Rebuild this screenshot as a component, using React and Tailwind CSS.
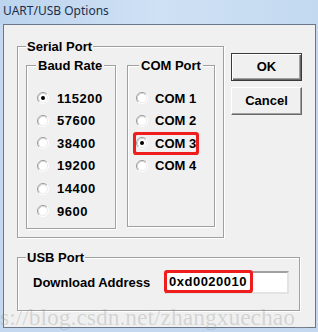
import React from "react";

const Radio = ({ checked }) => (
  <svg width="12" height="12" viewBox="0 0 12 12" className="shrink-0">
    <circle cx="6" cy="6" r="5" fill="#fff" />
    <path d="M2.11 9.89 A5.5 5.5 0 0 1 9.89 2.11" fill="none" stroke="#9a9a9a" />
    <path d="M9.89 2.11 A5.5 5.5 0 0 1 2.11 9.89" fill="none" stroke="#ffffff" />
    <path d="M2.82 9.18 A4.5 4.5 0 0 1 9.18 2.82" fill="none" stroke="#d2d2d2" />
    <path d="M9.18 2.82 A4.5 4.5 0 0 1 2.82 9.18" fill="none" stroke="#ececec" />
    {checked && <circle cx="6" cy="6" r="2" fill="#000" />}
  </svg>
);

const etched =
  "border border-[#a0a0a0] shadow-[inset_1px_1px_0_#ffffff,1px_1px_0_#ffffff]";

const bauds = ["115200", "57600", "38400", "19200", "14400", "9600"];
const coms = ["COM 1", "COM 2", "COM 3", "COM 4"];

export default function App() {
  return (
    <div className="relative w-[318px] h-[332px] overflow-hidden bg-[#c4d9ef] flex flex-col font-['Liberation_Sans',Arial,sans-serif] text-black">
      <div className="h-[24px] shrink-0 flex items-center pl-[3px] pb-[3px] bg-gradient-to-r from-[#bcd4ee] via-[#cfe1f4] to-[#c3d9f0] font-['Noto_Sans',sans-serif] text-[12px] text-[#1b2f4b]">
        UART/USB Options
      </div>
      <div className="ml-[3px] w-[313px] h-[304px] border border-[#6b7889] bg-[#f0f0f0] text-[13px] font-bold">
        <div className="flex items-start pt-[14px] pl-[13px]">
          <fieldset className={`w-[207px] h-[199px] ${etched}`}>
            <legend className="ml-[8px] px-[1px] leading-[15px] bg-[#f0f0f0]">Serial Port</legend>
            <div className="flex items-start pl-[8px] pt-[4px] gap-[11px]">
              <fieldset className={`w-[90px] h-[171px] ${etched}`}>
                <legend className="ml-[9px] px-[2px] leading-[15px] bg-[#f0f0f0]">Baud Rate</legend>
                <div className="flex flex-col pt-[14px] pl-[10px]">
                  {bauds.map((b, i) => (
                    <div key={b} className="h-[22.6px] flex items-center gap-[8px] tracking-[0.5px]">
                      <Radio checked={i === 0} />
                      <span>{b}</span>
                    </div>
                  ))}
                </div>
              </fieldset>
              <fieldset className={`w-[88px] h-[169px] ${etched}`}>
                <legend className="ml-[11px] px-[2px] leading-[15px] bg-[#f0f0f0]">COM Port</legend>
                <div className="flex flex-col pt-[14px] pl-[8px]">
                  {coms.map((c, i) => (
                    <div key={c} className="h-[22.6px] flex items-center">
                      <span
                        className={
                          i === 2
                            ? "flex items-center gap-[7px] h-[17px] rounded-[1px] shadow-[0_0_0_3px_#f01d1d]"
                            : "flex items-center gap-[7px] h-[17px]"
                        }
                      >
                        <Radio checked={i === 2} />
                        <span>{c}</span>
                      </span>
                    </div>
                  ))}
                </div>
              </fieldset>
            </div>
          </fieldset>
          <div className="ml-[7px] mt-[14px] flex flex-col gap-[6px]">
            <button className="w-[71px] h-[28px] flex items-center justify-center bg-[#f0f0f0] border border-[#3a3a3a] shadow-[inset_1px_1px_0_#ffffff,inset_-1px_-1px_0_#696969,inset_-2px_-2px_0_#a0a0a0]">
              OK
            </button>
            <button className="w-[71px] h-[28px] flex items-center justify-center bg-[#f0f0f0] border border-t-white border-l-white border-r-[#696969] border-b-[#696969] shadow-[inset_-1px_-1px_0_#a0a0a0]">
              Cancel
            </button>
          </div>
        </div>
        <fieldset className={`ml-[13px] mt-[12px] w-[283px] h-[61px] ${etched}`}>
          <legend className="ml-[8px] px-[1px] leading-[15px] bg-[#f0f0f0]">USB Port</legend>
          <div className="flex items-center pt-[6px] pl-[15px]">
            <span>Download Address</span>
            <div className="ml-auto mr-[10px] w-[124px] h-[23px] bg-white border-2 border-t-[#a0a0a0] border-l-[#a0a0a0] border-r-[#e3e3e3] border-b-[#e3e3e3] flex items-start">
              <span className="w-[83px] h-[17px] flex items-center pl-[2px] rounded-[1px] shadow-[0_0_0_3px_#f01d1d] tracking-[0.5px]">
                0xd0020010
              </span>
            </div>
          </div>
        </fieldset>
      </div>
      <div className="absolute left-0 top-[305px] whitespace-nowrap pointer-events-none font-['Liberation_Serif',serif] text-[23.5px] leading-[24px] text-[rgba(150,150,150,0.32)]">
        s://blog.csdn.net/zhangxuechao_
      </div>
    </div>
  );
}
